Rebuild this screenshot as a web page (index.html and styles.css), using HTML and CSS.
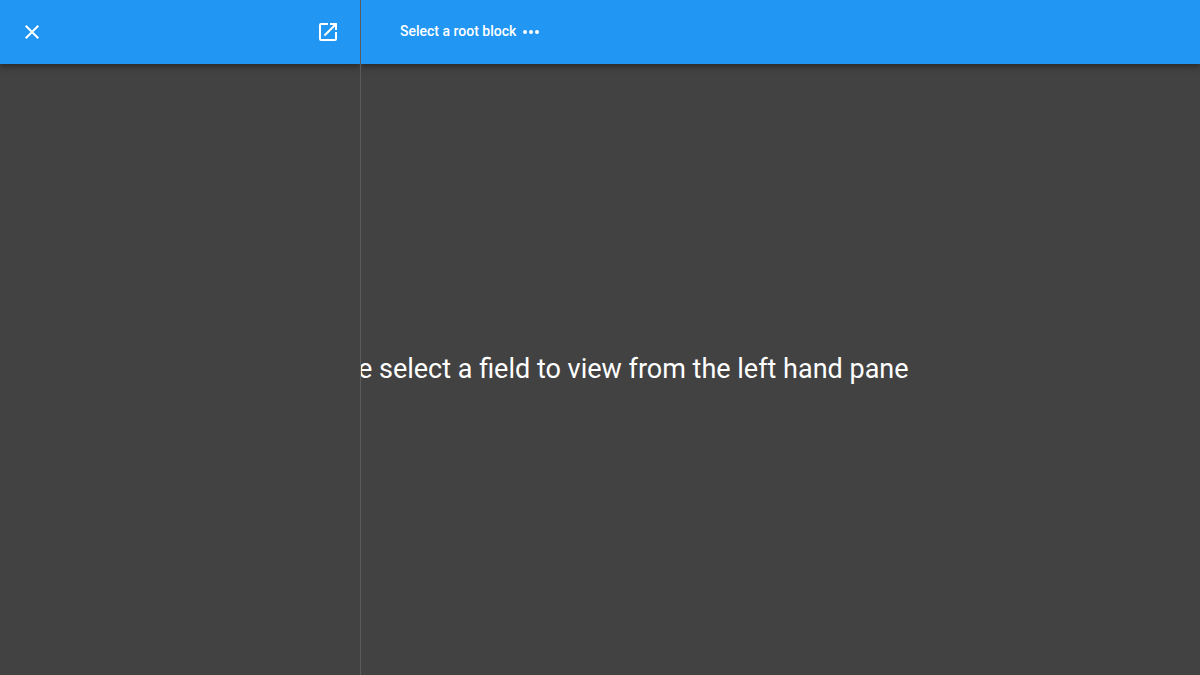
FILE: index.html
```html
<!DOCTYPE html>
<html lang="en">
<head>
<meta charset="utf-8">
<title>Block viewer</title>
<link rel="stylesheet" href="styles.css">
</head>
<body>
<div class="app">
  <aside class="pane">
    <header class="toolbar toolbar-pane">
      <button class="icon-button" type="button" aria-label="Close">
        <svg class="icon" viewBox="0 0 24 24"><path d="M19 6.41L17.59 5 12 10.59 6.41 5 5 6.41 10.59 12 5 17.59 6.41 19 12 13.41 17.59 19 19 17.59 13.41 12z"/></svg>
      </button>
      <button class="icon-button" type="button" aria-label="Open in new window">
        <svg class="icon" viewBox="0 0 24 24"><path d="M14 3v2h3.59l-9.83 9.83 1.41 1.41L19 6.41V10h2V3m-2 16H5V5h7V3H5a2 2 0 0 0-2 2v14a2 2 0 0 0 2 2h14a2 2 0 0 0 2-2v-7h-2z"/></svg>
      </button>
    </header>
  </aside>
  <header class="toolbar toolbar-main">
    <button class="root-button" type="button">
      <span class="root-label">Select a root block</span>
      <svg class="icon" viewBox="0 0 24 24"><circle cx="6" cy="12" r="2"/><circle cx="12" cy="12" r="2"/><circle cx="18" cy="12" r="2"/></svg>
    </button>
  </header>
  <main class="content">
    <p class="message">Please select a field to view from the left hand pane</p>
  </main>
</div>
</body>
</html>
```
FILE: styles.css
```css
* {
  box-sizing: border-box;
}

body {
  margin: 0;
  background: #424242;
  color: #fff;
  font-family: Roboto, sans-serif;
}

.app {
  display: grid;
  grid-template-columns: 361px 1fr;
  grid-template-rows: 64px 1fr;
  min-height: 100vh;
}

/* The side pane lies over the content, which spans the full window. */
.pane {
  grid-area: 1 / 1 / 3 / 2;
  z-index: 2;
  overflow: hidden;
  background: #424242;
  border-right: 1px solid #5b5b5b;
}

.toolbar {
  display: flex;
  align-items: center;
  height: 64px;
  background: #2196f3;
  box-shadow: 0 2px 4px -1px rgba(0, 0, 0, 0.2), 0 4px 5px rgba(0, 0, 0, 0.14), 0 1px 10px rgba(0, 0, 0, 0.12);
}

.toolbar-pane {
  justify-content: space-between;
  padding: 0 8px;
}

.toolbar-main {
  grid-area: 1 / 2 / 2 / 3;
  z-index: 1;
  padding: 0 39px;
}

.icon-button,
.root-button {
  display: flex;
  align-items: center;
  border: 0;
  background: none;
  color: inherit;
  cursor: pointer;
}

.icon-button {
  justify-content: center;
  width: 48px;
  height: 48px;
  padding: 0;
  border-radius: 50%;
}

.root-button {
  gap: 3px;
  height: 36px;
  padding: 0;
  font: 500 14px/20px Roboto, sans-serif;
}

.root-label {
  padding-bottom: 2px;
}

.icon {
  width: 24px;
  height: 24px;
  fill: currentColor;
}

.content {
  grid-area: 2 / 1 / 3 / 3;
  display: flex;
  align-items: center;
  justify-content: center;
  padding-bottom: 2px;
}

.message {
  margin: 0;
  font-size: 27px;
  line-height: 32px;
  text-align: center;
}
```
